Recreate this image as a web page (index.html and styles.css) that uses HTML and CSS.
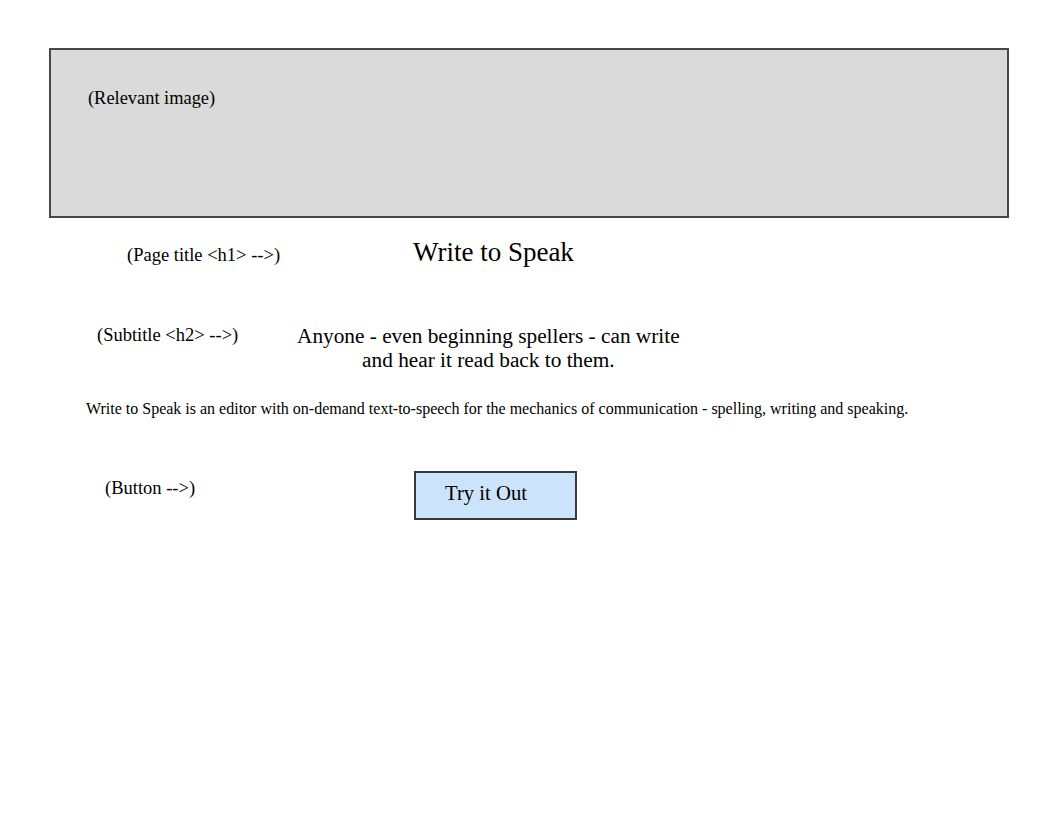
FILE: index.html
```html
<!DOCTYPE html>
<html>
<head>
<meta charset="utf-8">
<link rel="stylesheet" href="styles.css">
</head>
<body>
<div class="page">
  <div class="hero">(Relevant image)</div>
  <div class="row row-title">
    <div class="label label-title">(Page title &lt;h1&gt; --&gt;)</div>
    <h1 class="title">Write to Speak</h1>
  </div>
  <div class="row row-sub">
    <div class="label label-sub">(Subtitle &lt;h2&gt; --&gt;)</div>
    <h2 class="subtitle">Anyone - even beginning spellers - can write<br>and hear it read back to them.</h2>
  </div>
  <p class="desc">Write to Speak is an editor with on-demand text-to-speech for the mechanics of communication - spelling, writing and speaking.</p>
  <div class="row row-btn">
    <div class="label label-btn">(Button --&gt;)</div>
    <button class="btn">Try it Out</button>
  </div>
</div>
</body>
</html>
```

FILE: styles.css
```css
* { box-sizing: border-box; }
html, body { margin: 0; padding: 0; background: #ffffff; }
body {
  font-family: "Liberation Serif", "Times New Roman", serif;
  color: #000;
  width: 1056px;
  height: 816px;
}
.page { padding-top: 48px; }
.hero {
  margin-left: 49px;
  width: 960px;
  height: 170px;
  background: #dadada;
  border: 2px solid #474747;
  padding: 37px 0 0 37px;
  font-size: 18.4px;
  line-height: 22px;
}
.row { display: flex; align-items: flex-start; }
.label { font-size: 18.5px; line-height: 22px; flex: none; }
.row-title { margin-top: 17px; }
.label-title { margin-left: 127px; margin-top: 9px; width: 286px; }
.title {
  margin: 0;
  font-weight: normal;
  font-size: 27px;
  line-height: 34px;
}
.row-sub { margin-top: 55px; }
.label-sub { margin-left: 97px; width: 200px; }
.subtitle {
  margin: 0;
  font-weight: normal;
  font-size: 21.3px;
  line-height: 24px;
  text-align: center;
}
.desc {
  margin: 27px 0 0 86px;
  font-size: 16px;
  line-height: 20px;
}
.row-btn { margin-top: 52px; }
.label-btn { margin-left: 105px; margin-top: 6px; width: 309px; }
.btn {
  width: 163px;
  height: 49px;
  background: #cbe3fb;
  border: 2px solid #3a3a3a;
  border-radius: 0;
  font-family: inherit;
  font-size: 20.7px;
  color: #000;
  text-align: left;
  padding: 0 0 5px 29px;
}
```
